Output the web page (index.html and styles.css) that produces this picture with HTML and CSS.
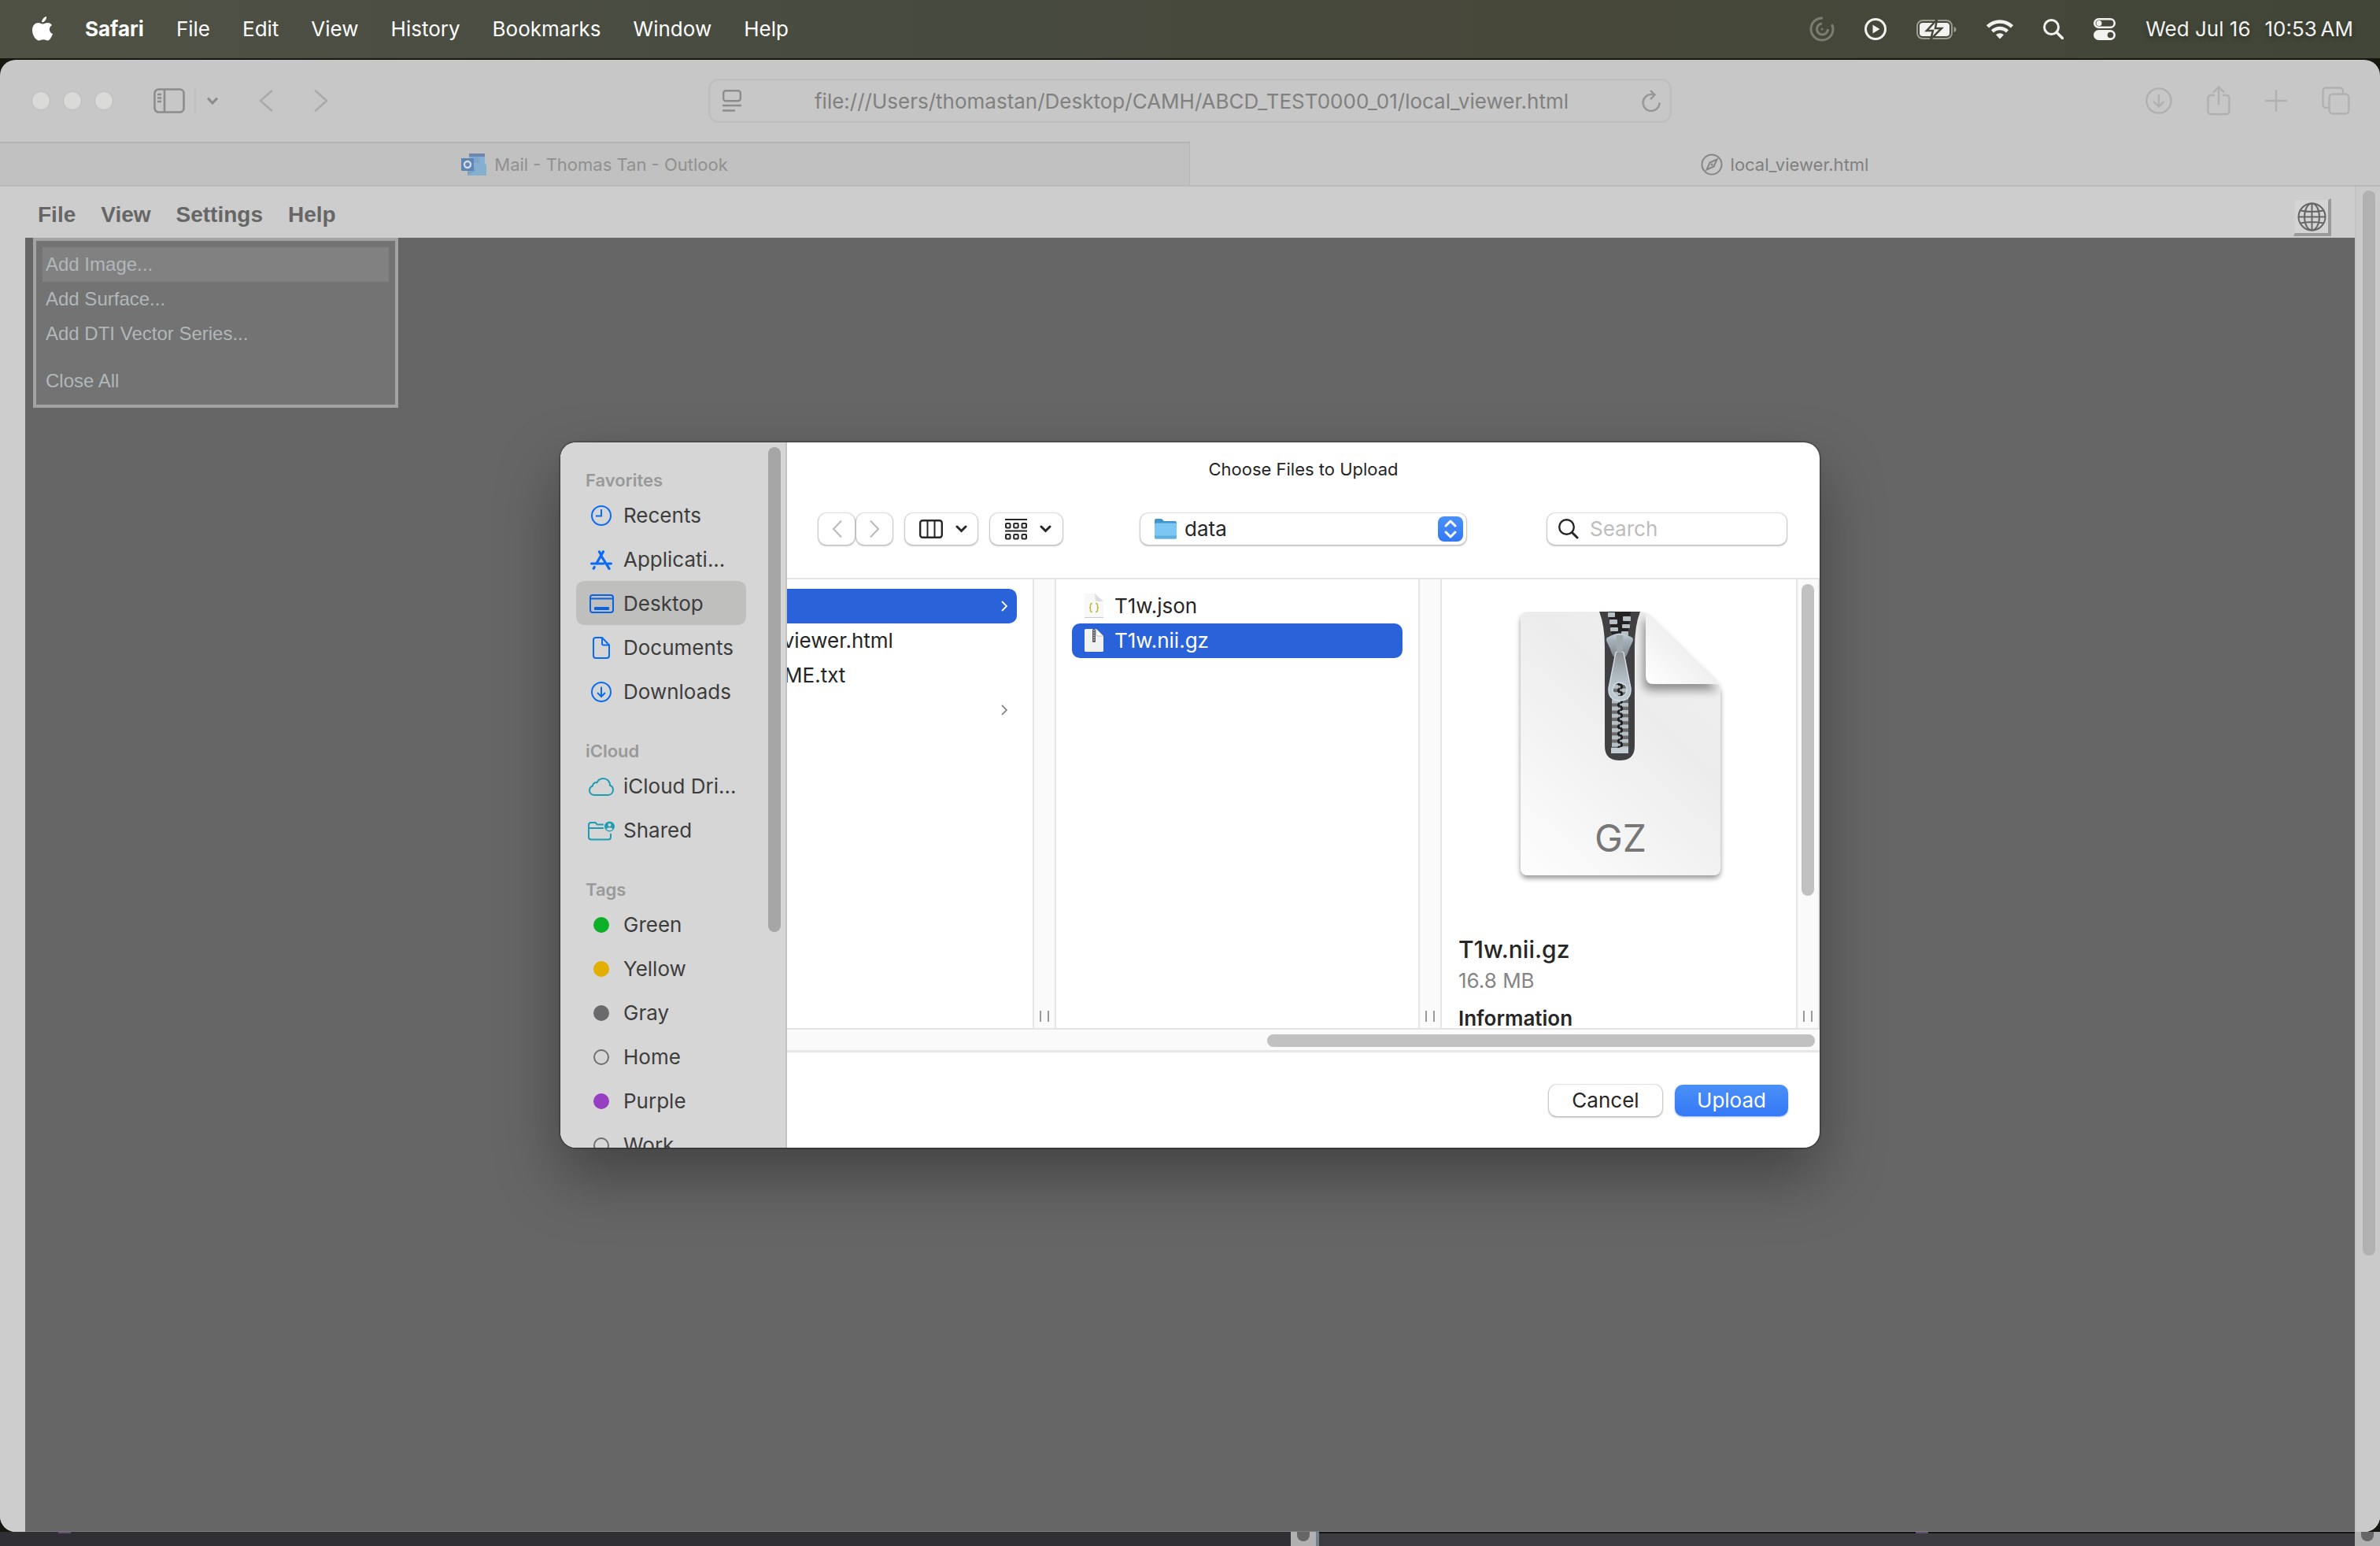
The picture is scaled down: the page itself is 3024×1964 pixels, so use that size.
FILE: index.html
```html
<!DOCTYPE html>
<html lang="en">
<head>
<meta charset="utf-8">
<title>local_viewer.html</title>
<link rel="stylesheet" href="styles.css">
</head>
<body>
<header class="menubar">
  <nav class="menubar-menus" aria-label="Menu bar">
    <button class="menubar-apple" aria-label="Apple menu"><svg width="26" height="32" viewBox="0 0 26 32" fill="#fff"><path d="M18 0c.3 3.700-2.600 7.300-5.800 7.300C11.800 4 14.800.6 18 0z"/><path d="M25 11c-2 1.200-3.200 3-3.100 5.400.1 2.700 1.700 4.600 4.100 5.500-.8 2.400-3.300 8.300-6.400 8.600-2.100.1-3-1.200-5.500-1.200s-3.700 1.200-5.500 1.200C4.500 30.500 0 23.500 0 17.300 0 11 4 8 7.500 8c2.400 0 4.200 1.500 5.800 1.500C14.900 9.500 17 7.900 19.700 8c2.200.1 4.100 1.100 5.300 3z"/></svg></button>
    <button class="menubar-app">Safari</button>
    <button>File</button>
    <button>Edit</button>
    <button>View</button>
    <button>History</button>
    <button>Bookmarks</button>
    <button>Window</button>
    <button>Help</button>
  </nav>
  <div class="menubar-status">
    <svg width="32" height="32" viewBox="0 0 32 32" fill="none" stroke="#7b7d71" stroke-width="3"><path d="M17 2a14 14 0 1 0 13 14q0-3-1.500-6"/><path d="M16 9a7 7 0 1 0 7.500 7"/><circle cx="16" cy="16" r="1.500" fill="#7b7d71" stroke="none"/></svg>
    <svg width="28" height="28" viewBox="0 0 28 28"><circle cx="14" cy="14" r="12.500" fill="none" stroke="#f2f2f0" stroke-width="3"/><path d="M10.500 8.500l9 5.500-9 5.500z" fill="#f2f2f0"/></svg>
    <svg width="51" height="25" viewBox="0 0 51 25"><rect x="1" y="1" width="44" height="23" rx="7" fill="none" stroke="#9b9c92" stroke-width="2"/><path d="M47.500 9c2 .6 3 1.800 3 3.500s-1 2.900-3 3.500z" fill="#9b9c92"/><rect x="4" y="4" width="38" height="17" rx="4" fill="#f2f2f0"/><path d="M26 0L13 14h8l-3 11 14-14h-8z" fill="#f2f2f0" stroke="#45483a" stroke-width="2.500"/></svg>
    <svg width="34" height="26" viewBox="0 0 34 26" fill="none" stroke="#f2f2f0" stroke-width="4.500"><path d="M1.500 9.800a22 22 0 0 1 31 0"/><path d="M7.500 15.800a13.500 13.500 0 0 1 19 0"/><path d="M17 25.500l-5-5.200a7 7 0 0 1 10 0z" fill="#f2f2f0" stroke="none"/></svg>
    <svg width="26" height="26" viewBox="0 0 26 26" fill="none" stroke="#f2f2f0" stroke-width="3"><circle cx="10.500" cy="10.500" r="9"/><path d="M17 17l7.500 7.500" stroke-width="3.500" stroke-linecap="round"/></svg>
    <svg width="28" height="28" viewBox="0 0 28 28"><rect x="1.300" y="1.300" width="25.400" height="10.400" rx="5.200" fill="none" stroke="#f2f2f0" stroke-width="2.600"/><circle cx="7" cy="6.500" r="3.500" fill="#f2f2f0"/><rect y="15" width="28" height="13" rx="6.500" fill="#f2f2f0"/><circle cx="21.500" cy="21.500" r="3.800" fill="#45483a"/></svg>
    <time class="menubar-clock"><span>Wed Jul 16</span><span>10:53&#8201;AM</span></time>
  </div>
</header>

<main class="browser">
  <div class="toolbar">
    <div class="toolbar-left">
      <div class="traffic"><i></i><i></i><i></i></div>
      <button class="sidebar-toggle" aria-label="Sidebar"><svg width="40" height="32" viewBox="0 0 40 32" fill="none" stroke="#8c8c8c" stroke-width="2.600"><rect x="1.500" y="1.500" width="37" height="29" rx="5"/><path d="M14 2v28M5 8h5M5 12.500h5M5 17h5" /></svg></button>
      <button class="toolbar-more" aria-label="Tab groups"><svg width="14" height="10" viewBox="0 0 14 10" fill="none" stroke="#8c8c8c" stroke-width="3"><path d="M1 1.500l6 6.500 6-6.500"/></svg></button>
      <button class="history" aria-label="Back"><svg width="18" height="28" viewBox="0 0 18 28" fill="none" stroke="#aaa" stroke-width="2.600" stroke-linecap="round" stroke-linejoin="round"><path d="M16 1.500L2 14l14 12.500"/></svg></button>
      <button class="history" aria-label="Forward"><svg width="18" height="28" viewBox="0 0 18 28" fill="none" stroke="#aaa" stroke-width="2.600" stroke-linecap="round" stroke-linejoin="round"><path d="M2 1.500L16 14 2 26.500"/></svg></button>
    </div>
    <div class="address">
      <svg width="24" height="28" viewBox="0 0 24 28" fill="none" stroke="#8c8c8c" stroke-width="2.400"><rect x="1.200" y="1.200" width="21.600" height="13" rx="3"/><path d="M0 20h24M0 26.500h16"/></svg>
      <input type="text" aria-label="Address" value="file:///Users/thomastan/Desktop/CAMH/ABCD_TEST0000_01/local_viewer.html">
      <button aria-label="Reload"><svg width="24" height="28" viewBox="0 0 24 28" fill="none" stroke="#969696" stroke-width="2.400"><path d="M14.500 6.200A10.500 10.500 0 1 0 22.600 16.500M11 1l5.500 5.500L11 12"/></svg></button>
    </div>
    <div class="toolbar-right">
      <button aria-label="Downloads"><svg width="34" height="34" viewBox="0 0 34 34" fill="none" stroke="#b0b0b0" stroke-width="2.400"><circle cx="17" cy="17" r="15.600"/><path d="M17 9v15M10.500 18l6.500 6.500 6.500-6.500"/></svg></button>
      <button aria-label="Share"><svg width="30" height="38" viewBox="0 0 30 38" fill="none" stroke="#b0b0b0" stroke-width="2.400"><path d="M10 12H5a3.500 3.500 0 0 0-3.500 3.500v17A3.500 3.500 0 0 0 5 36h20a3.500 3.500 0 0 0 3.500-3.500v-17A3.500 3.500 0 0 0 25 12h-5M15 24V2M8 8.500L15 1.500l7 7"/></svg></button>
      <button aria-label="New tab"><svg width="28" height="28" viewBox="0 0 28 28" fill="none" stroke="#b0b0b0" stroke-width="2.400"><path d="M14 0v28M0 14h28"/></svg></button>
      <button aria-label="Tab overview"><svg width="36" height="36" viewBox="0 0 36 36" fill="none" stroke="#b0b0b0" stroke-width="2.400"><rect x="9.500" y="9.500" width="25" height="25" rx="5"/><path d="M9 27H5.500a4 4 0 0 1-4-4V5.500a4 4 0 0 1 4-4H23a4 4 0 0 1 4 4V9"/></svg></button>
    </div>
  </div>

  <div class="tabs">
    <a class="tab" href="#mail"><svg width="32" height="28" viewBox="0 0 32 28"><rect x="10" width="20" height="20" fill="#86aed0"/><rect x="10" width="20" height="4" fill="#6c86ad"/><rect x="16" y="4" width="7" height="8" fill="#7ea6cd"/><path d="M8 14l12 7 12-8v15H8z" fill="#7fa3c4"/><path d="M8 28l24-15v15z" fill="#84b0cf"/><rect y="6" width="16" height="16" rx="1" fill="#5d86b5"/><circle cx="8" cy="14" r="4" fill="none" stroke="#d5dbe2" stroke-width="2.400"/></svg>Mail - Thomas Tan - Outlook</a>
    <a class="tab tab-active" href="#viewer"><svg width="28" height="28" viewBox="0 0 28 28" fill="none" stroke="#858585" stroke-width="2"><circle cx="14" cy="14" r="12.500"/><path d="M20.500 7.500l-4 9-9 4 4-9z"/><circle cx="14" cy="14" r="1.500" fill="#858585" stroke="none"/></svg>local_viewer.html</a>
  </div>

  <div class="page">
    <div class="viewer">
      <div class="viewer-bar">
        <nav class="viewer-menus" aria-label="Viewer">
          <button>File</button><button>View</button><button>Settings</button><button>Help</button>
        </nav>
        <button class="world" aria-label="World space"><svg width="37" height="37" viewBox="0 0 37 37" fill="none" stroke="#666" stroke-width="2"><circle cx="18.500" cy="18.500" r="17"/><path d="M18.500 1.500v34M1.500 18.500h34M4 10.500q14.500 3 29 0M4 26.500q14.500-3 29 0"/><ellipse cx="18.500" cy="18.500" rx="9.500" ry="17"/></svg></button>
      </div>
      <div class="canvas">
        <div class="dropdown">
          <button class="is-hover">Add Image...</button>
          <button>Add Surface...</button>
          <button>Add DTI Vector Series...</button>
          <button class="is-apart">Close All</button>
        </div>
      </div>
    </div>
    <div class="page-scroll"><div class="page-thumb"></div></div>
  </div>
</main>

<div class="behind" aria-hidden="true">
  <div class="behind-window"><i class="mark mark-left"></i><div class="behind-scroll"><i></i></div></div>
  <div class="behind-window behind-second"><i class="mark mark-right"></i><div class="behind-scroll"><i></i></div></div>
</div>

<dialog class="chooser" open aria-labelledby="chooser-title">
  <aside class="places">
    <div class="places-list">
      <h2>Favorites</h2>
      <ul>
        <li><a href="#recents"><span class="glyph"><svg width="26" height="26" viewBox="0 0 26 26" fill="none" stroke="#0a6cf5" stroke-width="2"><circle cx="13" cy="13" r="12"/><path d="M13 5v8.500H6"/></svg></span>Recents</a></li>
        <li><a href="#applications"><span class="glyph"><svg width="28" height="25" viewBox="0 0 28 25" fill="none" stroke="#0a6cf5" stroke-width="3.200" stroke-linecap="round"><path d="M1.600 17H17M22.500 17h3.900M11.500 2l2 3.500M16.500 1.800L8 16.500M13.500 6.500L24 23.400M5.200 21.500l-1 1.700"/></svg></span>Applicati...</a></li>
        <li><a class="is-current" href="#desktop"><span class="glyph"><svg width="31" height="24" viewBox="0 0 31 24" fill="none" stroke="#0a63e0" stroke-width="2"><rect x="1" y="1" width="29" height="22" rx="3"/><path d="M1 5.500h29"/><rect x="6" y="16" width="19" height="4" rx="1" fill="#0a63e0" stroke="none"/></svg></span>Desktop</a></li>
        <li><a href="#documents"><span class="glyph"><svg width="22" height="28" viewBox="0 0 22 28" fill="none" stroke="#0a6cf5" stroke-width="2"><path d="M4 1h8l9 9.500V24a3 3 0 0 1-3 3H4a3 3 0 0 1-3-3V4a3 3 0 0 1 3-3z"/><path d="M12 1v7.500a2 2 0 0 0 2 2h7"/></svg></span>Documents</a></li>
        <li><a href="#downloads"><span class="glyph"><svg width="26" height="26" viewBox="0 0 26 26" fill="none" stroke="#0a6cf5" stroke-width="2"><circle cx="13" cy="13" r="12"/><path d="M13 6.500V19M8 14l5 5 5-5"/></svg></span>Downloads</a></li>
      </ul>
      <h2>iCloud</h2>
      <ul>
        <li><a href="#icloud"><span class="glyph"><svg width="32" height="23" viewBox="0 0 32 23" fill="none" stroke="#1f9cb4" stroke-width="2"><path d="M7.500 22C3.500 22 1 19.500 1 16.200c0-3 1.800-5 4-5.700.2-3 2.800-5 5.500-4.300C12 3 15 1 18.500 1c5 0 8.600 3.800 8.600 8.800 2.300.8 3.900 3 3.900 5.800 0 3.600-2.800 6.400-6.500 6.400z"/></svg></span>iCloud Dri...</a></li>
        <li><a href="#shared"><span class="glyph"><svg width="34" height="25" viewBox="0 0 34 25" fill="none" stroke="#1f9cb4" stroke-width="2"><path d="M20 4.500h-8L9.500 2H4a3 3 0 0 0-3 3v15.500a3 3 0 0 0 3 3h22a3 3 0 0 0 3-3V16M1 9h19"/><circle cx="27.500" cy="7" r="6.500" fill="#1f9cb4" stroke="none"/><circle cx="27.500" cy="5" r="2" fill="#d6d6d6" stroke="none"/><path d="M23.500 10.500c1-3 7-3 8 0-2 2-6 2-8 0z" fill="#d6d6d6" stroke="none"/></svg></span>Shared</a></li>
      </ul>
      <h2>Tags</h2>
      <ul>
        <li><a href="#green"><span class="glyph"><i class="dot dot-green"></i></span>Green</a></li>
        <li><a href="#yellow"><span class="glyph"><i class="dot dot-yellow"></i></span>Yellow</a></li>
        <li><a href="#gray"><span class="glyph"><i class="dot dot-gray"></i></span>Gray</a></li>
        <li><a href="#home"><span class="glyph"><i class="dot"></i></span>Home</a></li>
        <li><a href="#purple"><span class="glyph"><i class="dot dot-purple"></i></span>Purple</a></li>
        <li><a href="#work"><span class="glyph"><i class="dot"></i></span>Work</a></li>
      </ul>
    </div>
    <div class="places-scroll"></div>
  </aside>

  <section class="files">
    <h1 id="chooser-title">Choose Files to Upload</h1>
    <div class="files-bar">
      <div class="files-nav">
        <button class="control nav-button" aria-label="Back"><svg width="13" height="24" viewBox="0 0 13 24" fill="none" stroke="#bdbdbd" stroke-width="2.200"><path d="M12 1.500L2 12l10 10.500"/></svg></button>
        <button class="control nav-button" aria-label="Forward"><svg width="13" height="24" viewBox="0 0 13 24" fill="none" stroke="#bdbdbd" stroke-width="2.200"><path d="M1 1.500L11 12 1 22.500"/></svg></button>
      </div>
      <button class="control view-button" aria-label="Column view"><svg width="30" height="24" viewBox="0 0 30 24" fill="none" stroke="#262626" stroke-width="2.400"><rect x="1.200" y="1.200" width="27.600" height="21.600" rx="3"/><path d="M10.500 1v22M19.500 1v22" stroke-width="2"/></svg><svg width="15" height="10" viewBox="0 0 15 10" fill="none" stroke="#262626" stroke-width="3" stroke-linecap="round"><path d="M2 2l5.500 5.500L13 2"/></svg></button>
      <button class="control view-button" aria-label="Group items"><svg width="28" height="27" viewBox="0 0 28 27" fill="none" stroke="#262626" stroke-width="2"><path d="M0 1h28M0 15.500h28"/><rect x="1" y="6" width="5.500" height="5.500" rx="1"/><rect x="11.200" y="6" width="5.500" height="5.500" rx="1"/><rect x="21.500" y="6" width="5.500" height="5.500" rx="1"/><rect x="1" y="20" width="5.500" height="5.500" rx="1"/><rect x="11.200" y="20" width="5.500" height="5.500" rx="1"/><rect x="21.500" y="20" width="5.500" height="5.500" rx="1"/></svg><svg width="15" height="10" viewBox="0 0 15 10" fill="none" stroke="#262626" stroke-width="3" stroke-linecap="round"><path d="M2 2l5.500 5.500L13 2"/></svg></button>
      <div class="control folder">
        <svg width="30" height="28" viewBox="0 0 30 28"><path d="M1 3a2 2 0 0 1 2-2h7l3 3h14a2 2 0 0 1 2 2v6H1z" fill="#4295cc"/><rect x="1" y="6.500" width="28" height="20" rx="1.500" fill="#7cc6f3"/><path d="M1 22.500h28v2.500a1.500 1.500 0 0 1-1.500 1.500h-25A1.500 1.500 0 0 1 1 25z" fill="#5fb0e0"/></svg>
        <select aria-label="Folder"><option>data</option></select>
        <span class="stepper"><svg width="16" height="24" viewBox="0 0 16 24" fill="none" stroke="#fff" stroke-width="3" stroke-linecap="round" stroke-linejoin="round"><path d="M2 8l6-6 6 6M2 16l6 6 6-6"/></svg></span>
      </div>
      <label class="control search"><svg width="26" height="26" viewBox="0 0 26 26" fill="none" stroke="#262626" stroke-width="2.400"><circle cx="10.500" cy="10.500" r="9.300"/><path d="M17.500 17.500l6.500 6.500" stroke-width="3" stroke-linecap="round"/></svg><input type="search" placeholder="Search" aria-label="Search"></label>
    </div>

    <div class="columns">
      <ul class="column">
        <li class="row is-selected" aria-label="data"><svg class="row-more" width="8" height="14" viewBox="0 0 8 14" fill="none" stroke="#fff" stroke-width="1.800"><path d="M1 1l6 6-6 6"/></svg></li>
        <li class="row row-plain">local_viewer.html</li>
        <li class="row row-plain">README.txt</li>
        <li class="row"><svg class="row-more" width="8" height="14" viewBox="0 0 8 14" fill="none" stroke="#8c8c8c" stroke-width="1.800"><path d="M1 1l6 6-6 6"/></svg></li>
      </ul>
      <div class="gutter"><i class="grip"></i></div>
      <ul class="column">
        <li class="row"><svg width="24" height="32" viewBox="0 0 24 32"><path d="M0 0h13l11 10v20H0z" fill="#f8f8f8"/><path d="M13 0l11 10h-7.500a3 3 0 0 1-3-3z" fill="#dedede"/><path d="M0 30.500h24" stroke="#c9c9c9"/><path d="M10 12.500q-3 0-2.500 3 .3 2.500-1.500 2.500 1.800 0 1.500 2.500-.5 3 2.500 3M14 12.500q3 0 2.500 3-.3 2.500 1.500 2.500-1.800 0-1.500 2.500.5 3-2.500 3" fill="none" stroke="#bdb93c" stroke-width="1.500"/></svg>T1w.json</li>
        <li class="row is-selected"><svg width="24" height="30" viewBox="0 0 24 30"><path d="M1.500 0H15l9 9v18.500a1.500 1.500 0 0 1-1.500 1.500h-21A1.500 1.500 0 0 1 0 27.500v-26A1.500 1.500 0 0 1 1.500 0z" fill="#f1f1f1"/><path d="M15 0l9 9h-7a2 2 0 0 1-2-2z" fill="#fff" stroke="#aaa" stroke-width=".7"/><rect x="10" width="4" height="17" rx="1.500" fill="#55585a"/><path d="M12 1v15" stroke="#aeb6bb" stroke-width="1.600" stroke-dasharray="2 1"/></svg>T1w.nii.gz</li>
      </ul>
      <div class="gutter"><i class="grip"></i></div>
      <div class="preview">
        <svg class="preview-art" width="270" height="350" viewBox="-8 0 270 350">
          <defs>
            <linearGradient id="paper" x1="0" y1="1" x2=".7" y2="0"><stop offset="0" stop-color="#fdfdfd"/><stop offset=".7" stop-color="#ececec"/><stop offset="1" stop-color="#efefef"/></linearGradient>
            <linearGradient id="flap" x1="0" y1="1" x2=".6" y2=".4"><stop offset="0" stop-color="#fff"/><stop offset="1" stop-color="#ededed"/></linearGradient>
            <linearGradient id="metal" x1="0" y1="0" x2="0" y2="1"><stop offset="0" stop-color="#c3ced5"/><stop offset=".3" stop-color="#a3afb8"/><stop offset="1" stop-color="#7d8488"/></linearGradient>
            <linearGradient id="pull" x1="0" y1="0" x2="0" y2="1"><stop offset="0" stop-color="#8b9093"/><stop offset=".6" stop-color="#b5c1c9"/><stop offset="1" stop-color="#bccad4"/></linearGradient>
            <pattern id="teeth" x="115" y="0" width="24" height="9.200" patternUnits="userSpaceOnUse"><rect width="24" height="9.200" fill="#6b6967"/><rect x="8" width="7" height="9.200" fill="#202020"/><rect x="1" y="1" width="8" height="5" fill="#b4bfc6"/><rect x="8" y="2" width="4" height="3" rx="1" fill="#b4bfc6"/><path d="M14 5.500h8v3.700h-8zM14 0h8v1.200h-8z" fill="#b4bfc6"/><rect x="11" y="6.500" width="4" height="2.500" rx="1" fill="#b4bfc6"/></pattern>
            <filter id="lift" x="-20%" y="-20%" width="140%" height="140%"><feDropShadow dx="0" dy="4" stdDeviation="3" flood-opacity=".4"/></filter>
            <filter id="soft" x="-40%" y="-40%" width="180%" height="180%"><feGaussianBlur stdDeviation="6"/></filter>
            <clipPath id="sheet"><path d="M10 0H150q8 0 14 5l82 80q8 7 8 18v222q0 10-10 10H10q-10 0-10-10V10Q0 0 10 0z"/></clipPath>
          </defs>
          <path d="M10 0H150q8 0 14 5l82 80q8 7 8 18v222q0 10-10 10H10q-10 0-10-10V10Q0 0 10 0z" fill="url(#paper)" filter="url(#lift)"/>
          <g clip-path="url(#sheet)">
            <path d="M156 6v84q0 10 10 10h86z" fill="#000" opacity=".4" filter="url(#soft)"/>
            <path d="M159 2v80q0 10 10 10h84q-2-4-7-8L166 6q-4-4-7-4z" fill="url(#flap)"/>
            <path d="M100 0q7 18 7 45v126q0 18 19 18t19-18V45q0-27 7-45z" fill="#414043"/>
            <path d="M112 0h28l-4 30h-20z" fill="#232323"/>
            <g fill="#b4bfc6"><rect x="111" y="1" width="9" height="6" rx="1"/><rect x="113" y="10" width="10" height="6" rx="1"/><rect x="114" y="20" width="10" height="5" rx="1"/><rect x="130" y="6" width="10" height="6" rx="1"/><rect x="129" y="16" width="10" height="5" rx="1"/><rect x="128" y="25" width="9" height="5" rx="1"/></g>
            <rect x="116" y="86" width="21" height="88" fill="url(#teeth)"/>
            <rect x="115" y="173" width="22" height="7" fill="#c4cdd3"/>
            <path d="M118 29q8-3 16 0l8 4q2 2 0 6-4 8-6 14-2 7-10 7t-10-7q-2-6-6-14-2-4 0-6z" fill="url(#metal)"/>
            <path d="M121 52q5-4 10 0l9 45q1 16-14 16t-14-16zm5 38a9 9 0 1 0 .1 0z" fill="url(#pull)" fill-rule="evenodd" stroke="#d3dde2" stroke-width="1.400"/>
            <path d="M122 30h8v20q-4 5-8 0z" fill="#a2a9ad"/>
          </g>
          <text x="127" y="305" text-anchor="middle" class="preview-kind">GZ</text>
        </svg>
        <h3>T1w.nii.gz</h3>
        <p>16.8 MB</p>
        <h4>Information</h4>
      </div>
      <div class="gutter gutter-last"><div class="preview-thumb"></div><i class="grip"></i></div>
    </div>
    <div class="columns-scroll"><div class="columns-thumb"></div></div>

    <footer class="actions">
      <button class="control action">Cancel</button>
      <button class="action action-primary">Upload</button>
    </footer>
  </section>
</dialog>
</body>
</html>
```
FILE: styles.css
```css
* { box-sizing: border-box; }

body {
  margin: 0;
  min-height: 100vh;
  display: flex;
  flex-direction: column;
  position: relative;
  overflow: hidden;
  background: #16170f;
  color: #262626;
  font: 26px/32px Inter, sans-serif;
}

button, input, select {
  margin: 0;
  padding: 0;
  border: 0;
  background: none;
  color: inherit;
  font: inherit;
  outline: 0;
}

svg { display: block; flex: none; }
ul { margin: 0; padding: 0; list-style: none; }
h1, h2, h3, h4, p { margin: 0; }
a { color: inherit; text-decoration: none; }

/* System menu bar */
.menubar {
  display: flex;
  justify-content: space-between;
  align-items: center;
  height: 74px;
  padding: 0 34px 0 41px;
  background: linear-gradient(90deg, #4f5145, #474a3f 40%, #47483a 65%, #414638);
  color: #fff;
  text-shadow: 0 3px 6px rgba(0, 0, 0, .35);
}
.menubar-menus { display: flex; align-items: center; gap: 41px; }
.menubar-app { font-weight: 700; }
.menubar-status { display: flex; align-items: center; gap: 38px; color: #f2f2f0; }
.menubar-clock { display: flex; gap: 18px; }

/* Browser window */
.browser {
  flex: 1;
  display: flex;
  flex-direction: column;
  margin-top: 2px;
  border-radius: 20px;
  overflow: hidden;
  background: #c7c7c7;
}
.toolbar {
  display: grid;
  grid-template-columns: 1fr minmax(0, 1224px) 1fr;
  align-items: center;
  height: 104px;
}
.toolbar-left { display: flex; align-items: center; padding-left: 40px; }
.traffic { display: flex; gap: 16px; }
.traffic i { width: 24px; height: 24px; border: 1px solid #bcbcba; border-radius: 50%; background: #dadad8; }
.sidebar-toggle { margin-left: 51px; padding-right: 12px; border-right: 2px solid #c0c0c0; }
.toolbar-more { margin: 0 28px 0 14px; }
.history { padding: 0 24px; }
.history + .history { padding: 0 28px; }
.address {
  display: flex;
  align-items: center;
  gap: 16px;
  height: 56px;
  padding: 0 12px 0 16px;
  border: 2px solid #bdbdbd;
  border-radius: 14px;
}
.address input { flex: 1; min-width: 0; padding-top: 2px; text-align: center; color: #808080; }
.toolbar-right { display: flex; justify-content: flex-end; align-items: center; gap: 44px; padding-right: 38px; }

.tabs { display: grid; grid-template-columns: 1fr 1fr; height: 57px; border-bottom: 2px solid #bababa; }
.tab {
  display: flex;
  justify-content: center;
  align-items: center;
  gap: 10px;
  border-top: 2px solid #b4b4b4;
  border-right: 1px solid #b6b6b6;
  background: #c1c1c1;
  color: #909090;
  font-size: 22px;
}
.tab-active { border-color: transparent; background: none; color: #808080; }

.page { flex: 1; display: flex; background: #cdcdcd; }
.viewer { flex: 1; display: flex; flex-direction: column; padding-left: 32px; }
.viewer-bar { display: flex; justify-content: space-between; align-items: center; height: 65px; }
.viewer-menus {
  display: flex;
  gap: 32px;
  padding: 6px 0 0 16px;
  color: #666;
  font: bold 28px/32px "Liberation Sans", sans-serif;
}
.world {
  align-self: flex-end;
  margin: 0 30px 2px 0;
  padding: 3px 2px 2px 3px;
  border-style: solid;
  border-color: #cdcdcd #9a9a9a #9a9a9a #cdcdcd;
  border-width: 2px 4px 4px 2px;
  background: #d4d4d4;
}
.canvas { flex: 1; padding-left: 10px; border-bottom: 1px solid #7a7a7a; background: #666; }
.dropdown {
  display: flex;
  flex-direction: column;
  width: 464px;
  padding: 8px;
  border: 4px solid #a3a3a3;
  background: #737373;
  color: #b0b8ba;
  font: 24px/44px "Liberation Sans", sans-serif;
}
.dropdown button { padding: 0 4px; text-align: left; }
.dropdown .is-hover { background: #818181; }
.dropdown .is-apart { margin-top: 16px; }
.page-scroll { width: 32px; padding: 5px 6px 0 8px; border-left: 2px solid #c2c2c2; background: #cacaca; }
.page-thumb { height: 79.4%; border-radius: 8px; background: #b1b1b1; }

/* Windows that show below the browser */
.behind { display: grid; grid-template-columns: 1672fr 1352fr; height: 18px; }
.behind-window { display: flex; align-items: flex-start; background: #303034; border-bottom: 2px solid #3d3640; }
.behind-second { border-left: 4px solid #77808c; background: linear-gradient(#14151b 2px, #3c3c40 2px); }
.behind-scroll { width: 32px; height: 18px; padding: 0 8px; margin-left: auto; background: #b0b0b0; }
.behind-scroll i { display: block; height: 12px; border-radius: 0 0 8px 8px; background: #666; }
.mark { width: 16px; height: 2px; background: #674f73; }
.mark-left { margin-left: 74px; }
.mark-right { margin-left: 758px; }

/* File chooser */
.chooser {
  position: absolute;
  inset: 562px 0 auto;
  display: flex;
  width: 1600px;
  max-width: 100%;
  height: 896px;
  margin: 0 auto;
  padding: 0;
  border: 0;
  border-radius: 20px;
  overflow: hidden;
  background: #fff;
  color: #262626;
  box-shadow: 0 0 2px 1px rgba(0, 0, 0, .45), 0 36px 80px rgba(0, 0, 0, .35);
}

.places {
  display: flex;
  justify-content: space-between;
  flex: none;
  width: 288px;
  padding-right: 6px;
  border-right: 2px solid #c4c4c4;
  background: #d6d6d6;
  color: #3d3d3d;
}
.places-list { width: 236px; padding-left: 20px; }
.places h2 { padding: 32px 12px 0; color: #999; font-size: 22px; font-weight: 600; line-height: 32px; }
.places a {
  display: flex;
  align-items: center;
  gap: 8px;
  height: 56px;
  padding: 2px 0 0 12px;
  border-radius: 10px;
  white-space: nowrap;
}
.places .is-current { background: #bfbfbd; }
.glyph { display: flex; justify-content: center; flex: none; width: 40px; }
.dot { width: 20px; height: 20px; border: 2px solid #6e6e6e; border-radius: 50%; }
.dot-green { border-color: #0db026; background: #0db026; }
.dot-yellow { border-color: #e2ae00; background: #e2ae00; }
.dot-gray { border-color: #6a6a6e; background: #6a6a6e; }
.dot-purple { border-color: #963fc2; background: #963fc2; }
.places-scroll { width: 16px; height: 616px; margin-top: 6px; border-radius: 8px; background: #a6a6a6; }

.files { flex: 1; display: flex; flex-direction: column; min-width: 0; }
.files h1 { padding-top: 18px; text-align: center; font-size: 22px; font-weight: 400; line-height: 32px; }
.files-bar { display: flex; padding: 40px 42px 42px 40px; }
.control {
  border-radius: 10px;
  background: #fff;
  box-shadow: 0 0 0 1px rgba(0, 0, 0, .07), 0 1px 2px 1px rgba(0, 0, 0, .2);
}
.files-nav { display: flex; gap: 2px; margin-right: 16px; }
.nav-button { display: flex; justify-content: center; align-items: center; width: 46px; height: 40px; }
.view-button {
  display: flex;
  justify-content: center;
  align-items: center;
  gap: 16px;
  width: 92px;
  height: 40px;
  margin-right: 16px;
  padding-left: 4px;
}
.folder { display: flex; align-items: center; width: 414px; height: 40px; margin-left: 83px; padding: 0 4px 0 17px; }
.folder select { flex: 1; margin-left: 9px; appearance: none; height: 40px; }
.stepper {
  display: flex;
  justify-content: center;
  align-items: center;
  width: 32px;
  height: 32px;
  border-radius: 8px;
  background: linear-gradient(#4a90f8, #3478f6);
}
.search { display: flex; align-items: center; gap: 14px; width: 304px; height: 40px; margin-left: auto; padding: 0 14px; }
.search input { flex: 1; min-width: 0; }
.search input::placeholder { color: #bdbdbd; opacity: 1; }

/* The browser view is scrolled to its right end */
.columns {
  display: flex;
  justify-content: flex-end;
  height: 572px;
  border-top: 2px solid #e4e4e4;
  overflow: hidden;
}
.column { flex: none; width: 460px; padding: 12px 20px; }
.row { display: flex; align-items: center; gap: 14px; height: 44px; padding: 0 12px 0 16px; border-radius: 10px; }
.row-plain { padding-left: 55px; }
.row-more { margin-left: auto; }
.is-selected { background: #2962d9; color: #fff; }
.gutter {
  display: flex;
  flex-direction: column;
  align-items: center;
  flex: none;
  width: 30px;
  padding-bottom: 8px;
  border: solid #e6e6e6;
  border-width: 0 2px;
  background: #fafafa;
}
.grip { width: 12px; height: 14px; margin-top: auto; border: solid #999; border-width: 0 2px; }
.preview { flex: none; width: 450px; padding: 41px 21px 0; }
.preview-art { margin: 0 auto 61px 71px; }
.preview-kind { fill: #777; font-size: 48px; }
.preview h3 { font-size: 30px; font-weight: 500; line-height: 36px; }
.preview p { padding: 6px 0 16px; color: #858585; line-height: 32px; }
.preview h4 { font-size: 26px; font-weight: 600; line-height: 32px; }
.preview-thumb { width: 16px; height: 396px; margin-top: 6px; border-radius: 8px; background: #c1c1c1; }

.columns-scroll {
  display: flex;
  justify-content: flex-end;
  height: 31px;
  padding: 6px 6px 0;
  border-top: 2px solid #e4e4e4;
  border-bottom: 3px solid #e6e6e6;
  background: #fafafa;
}
.columns-thumb { width: 696px; height: 16px; border-radius: 8px; background: #c1c1c1; }

.actions { flex: 1; display: flex; justify-content: flex-end; align-items: center; gap: 16px; padding-right: 40px; }
.action { width: 144px; height: 40px; border-radius: 10px; }
.action-primary { background: linear-gradient(#4a90f8, #3478f6); color: #fff; box-shadow: 0 1px 2px rgba(40, 100, 240, .5); }
```
